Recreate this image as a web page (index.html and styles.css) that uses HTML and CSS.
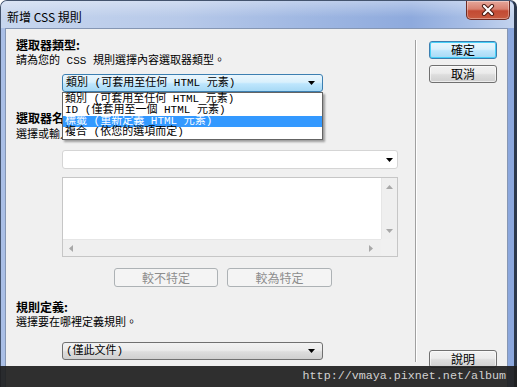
FILE: index.html
```html
<!DOCTYPE html>
<html>
<head>
<meta charset="utf-8">
<link rel="stylesheet" href="styles.css">
</head>
<body>
<div class="window">
  <div class="titlebar">
    <span class="title">新增 CSS 規則</span>
    <div class="close">
      <svg width="16" height="12" viewBox="0 0 16 12"><path d="M4 2 L12 10 M12 2 L4 10" stroke="#4a1c14" stroke-width="4.2" stroke-linecap="round"/><path d="M4 2 L12 10 M12 2 L4 10" stroke="#ffffff" stroke-width="2.2" stroke-linecap="round"/></svg>
    </div>
  </div>
  <div class="client">
    <div class="main">
      <div class="label bold">選取器類型:</div>
      <div class="label desc">請為您的 CSS 規則選擇內容選取器類型。</div>
      <div class="select-wrap">
        <div class="select focused"><span class="sel-text">類別 (可套用至任何 HTML 元素)</span><svg class="arrow" width="7" height="4" viewBox="0 0 7 4"><path d="M0 0 H7 L3.5 4 Z" fill="#000"/></svg></div>
        <ul class="droplist">
          <li>類別 (可套用至任何 HTML 元素)</li>
          <li>ID (僅套用至一個 HTML 元素)</li>
          <li class="hl">標籤 (重新定義 HTML 元素)</li>
          <li>複合 (依您的選項而定)</li>
        </ul>
      </div>
      <div class="label bold mt18">選取器名稱:</div>
      <div class="label desc mt1">選擇或輸入選取器名稱。</div>
      <div class="combo"><svg class="arrow" width="7" height="4" viewBox="0 0 7 4"><path d="M0 0 H7 L3.5 4 Z" fill="#000"/></svg></div>
      <div class="listbox">
        <div class="lb-top">
          <div class="lb-area"></div>
          <div class="vscroll">
            <svg width="7" height="4" viewBox="0 0 7 4"><path d="M0 4 H7 L3.5 0 Z" fill="#a8a8a8"/></svg>
            <svg width="7" height="4" viewBox="0 0 7 4"><path d="M0 0 H7 L3.5 4 Z" fill="#a8a8a8"/></svg>
          </div>
        </div>
        <div class="lb-bottom">
          <div class="hscroll">
            <svg width="4" height="7" viewBox="0 0 4 7"><path d="M4 0 V7 L0 3.5 Z" fill="#a8a8a8"/></svg>
            <svg width="4" height="7" viewBox="0 0 4 7"><path d="M0 0 V7 L4 3.5 Z" fill="#a8a8a8"/></svg>
          </div>
          <div class="corner"></div>
        </div>
      </div>
      <div class="btnrow">
        <div class="btn disabled wide1">較不特定</div>
        <div class="btn disabled wide2">較為特定</div>
      </div>
      <div class="label bold mt12">規則定義:</div>
      <div class="label desc">選擇要在哪裡定義規則。</div>
      <div class="select gray"><span class="sel-text">(僅此文件)</span><svg class="arrow" width="7" height="4" viewBox="0 0 7 4"><path d="M0 0 H7 L3.5 4 Z" fill="#000"/></svg></div>
    </div>
    <div class="sep"></div>
    <div class="side">
      <div class="btn focus">確定</div>
      <div class="btn mt6">取消</div>
      <div class="btn help">說明</div>
    </div>
  </div>
  <div class="watermark">http://vmaya.pixnet.net/album</div>
</div>
</body>
</html>
```
FILE: styles.css
```css
* { box-sizing: border-box; }
body {
  margin: 0;
  width: 517px;
  height: 387px;
  overflow: hidden;
  background: #ffffff;
  font-family: "Noto Sans CJK TC", "Noto Sans", sans-serif;
  color: #000;
}
.window {
  position: relative;
  width: 517px;
  height: 387px;
  display: flex;
  flex-direction: column;
  border: 1px solid #44546e;
  border-right: 3px solid #2c384c;
  border-bottom: none;
  border-radius: 7px 7px 0 0;
  padding: 0 6px 0 4px;
  background: linear-gradient(to right, #aabfe6 0%, #9db5e1 50%, #8ba7dd 100%);
}
.titlebar {
  height: 27px;
  flex: none;
  display: flex;
  align-items: flex-start;
  justify-content: space-between;
  margin: 0 -6px 0 -4px;
  padding: 0 5px 0 6px;
  border-radius: 6px 6px 0 0;
  background:
    linear-gradient(to bottom, rgba(255,255,255,0.35), rgba(255,255,255,0) 60%),
    linear-gradient(to right, #c7d6ee 0%, #b7c9e9 35%, #9fb7e2 60%, #8eaadd 80%, #a9bfe6 92%, #c3d3ee 100%);
}
.title {
  font-size: 12px;
  line-height: 16px;
  margin-top: 8px;
  color: #000;
}
.close {
  width: 44px;
  height: 19px;
  margin-top: 0;
  margin-right: -1px;
  border: 1px solid #6e2b22;
  border-top: none;
  border-radius: 0 0 5px 5px;
  background: linear-gradient(to bottom, #e5a79b 0%, #d8806f 45%, #c24a33 55%, #c85a3f 100%);
  display: flex;
  align-items: center;
  justify-content: center;
  box-shadow: inset 0 0 0 1px rgba(255,255,255,0.35);
}
.close svg { display: block; }
.client {
  flex: 1;
  display: flex;
  background: #f0f0f0;
  border: 1px solid #8596b3;
  border-bottom: none;
}
.main {
  width: 409px;
  flex: none;
  padding: 8px 0 0 10px;
  display: flex;
  flex-direction: column;
  align-items: flex-start;
}
.label {
  font-size: 12px;
  line-height: 16px;
  white-space: nowrap;
}
.bold { font-weight: bold; }
.desc {
  font-family: "Liberation Mono", "Noto Sans CJK TC", monospace;
  font-size: 11px;
}
.mt18 { margin-top: 18px; }
.mt1 { margin-top: 1px; }
.mt12 { margin-top: 12px; }
.mt6 { margin-top: 6px; }
.select-wrap {
  position: relative;
  margin: 5px 0 0 46px;
}
.select {
  width: 261px;
  height: 18px;
  border: 1px solid #707070;
  border-radius: 3px;
  display: flex;
  align-items: center;
  justify-content: space-between;
  padding: 0 7px 0 3px;
  font-family: "Liberation Mono", "Noto Sans CJK TC", monospace;
  font-size: 11px;
  line-height: 14px;
  white-space: nowrap;
}
.select.focused {
  border-color: #3c7fb1;
  background: linear-gradient(to bottom, #eaf6fd 0%, #d9f0fc 45%, #bee6fd 55%, #a7d9f5 100%);
}
.select.gray {
  margin: 11px 0 0 46px;
  background: linear-gradient(to bottom, #f2f2f2 0%, #ebebeb 45%, #dddddd 55%, #cfcfcf 100%);
}
.arrow { display: block; flex: none; }
.droplist {
  position: absolute;
  top: 18px;
  left: 0;
  width: 261px;
  height: 48px;
  margin: 0;
  padding: 1px 0 0 0;
  list-style: none;
  background: #ffffff;
  border: 1px solid #646464;
  box-shadow: 2px 2px 2px rgba(0,0,0,0.35);
  z-index: 2;
}
.droplist li {
  height: 11px;
  line-height: 11px;
  padding-left: 2px;
  font-family: "Liberation Mono", "Noto Sans CJK TC", monospace;
  font-size: 11px;
  white-space: nowrap;
}
.droplist li.hl {
  background: #3399ff;
  color: #ffffff;
}
.combo {
  margin: 7px 0 0 46px;
  width: 336px;
  height: 19px;
  background: #ffffff;
  border: 1px solid #d5d5d5;
  border-radius: 3px;
  display: flex;
  align-items: center;
  justify-content: flex-end;
  padding-right: 4px;
}
.listbox {
  margin: 8px 0 0 46px;
  width: 336px;
  height: 80px;
  border: 1px solid #c6c6c6;
  background: #ffffff;
  display: flex;
  flex-direction: column;
}
.lb-top { flex: 1; display: flex; }
.lb-area { flex: 1; }
.vscroll {
  width: 16px;
  background: #efefef;
  border-left: 1px solid #e6e6e6;
  display: flex;
  flex-direction: column;
  align-items: center;
  justify-content: space-between;
  padding: 7px 0 6px 0;
}
.lb-bottom { height: 17px; display: flex; }
.hscroll {
  flex: 1;
  background: #efefef;
  border-top: 1px solid #e6e6e6;
  display: flex;
  align-items: center;
  justify-content: space-between;
  padding: 0 8px 0 6px;
}
.corner { width: 16px; background: #f0f0f0; }
.vscroll svg, .hscroll svg { display: block; }
.btnrow {
  margin: 11px 0 0 98px;
  display: flex;
  gap: 9px;
}
.btn {
  height: 19px;
  width: 68px;
  border: 1px solid #707070;
  border-radius: 3px;
  background: linear-gradient(to bottom, #f2f2f2 0%, #ebebeb 45%, #dddddd 55%, #cfcfcf 100%);
  box-shadow: inset 0 0 0 1px rgba(255,255,255,0.6);
  font-size: 12px;
  line-height: 16px;
  display: flex;
  align-items: center;
  justify-content: center;
  white-space: nowrap;
}
.btn.disabled {
  border-color: #adb2b5;
  background: #f4f4f4;
  color: #8d8d8d;
  box-shadow: none;
}
.wide1 { width: 104px; }
.wide2 { width: 105px; }
.btn.focus {
  height: 18px;
  border-color: #3c7fb1;
  box-shadow: inset 0 0 0 1px #48d0f8;
  background: linear-gradient(to bottom, #eaf6fd 0%, #d9f0fc 45%, #bee6fd 55%, #a7d9f5 100%);
}
.sep {
  width: 2px;
  flex: none;
  margin: 11px 0 25px 0;
  border-left: 1px solid #a0a0a0;
  border-right: 1px solid #ffffff;
}
.side {
  flex: 1;
  display: flex;
  flex-direction: column;
  padding: 12px 0 19px 12px;
}
.side .btn { height: 18px; }
.help { margin-top: auto; }
.watermark {
  position: absolute;
  left: -1px;
  right: -3px;
  bottom: 0;
  height: 21px;
  background: rgba(30,30,30,0.92);
  color: #d2d2d2;
  font-family: "Liberation Mono", monospace;
  font-size: 11.7px;
  line-height: 21px;
  text-align: right;
  padding-right: 11px;
  z-index: 5;
}
```
